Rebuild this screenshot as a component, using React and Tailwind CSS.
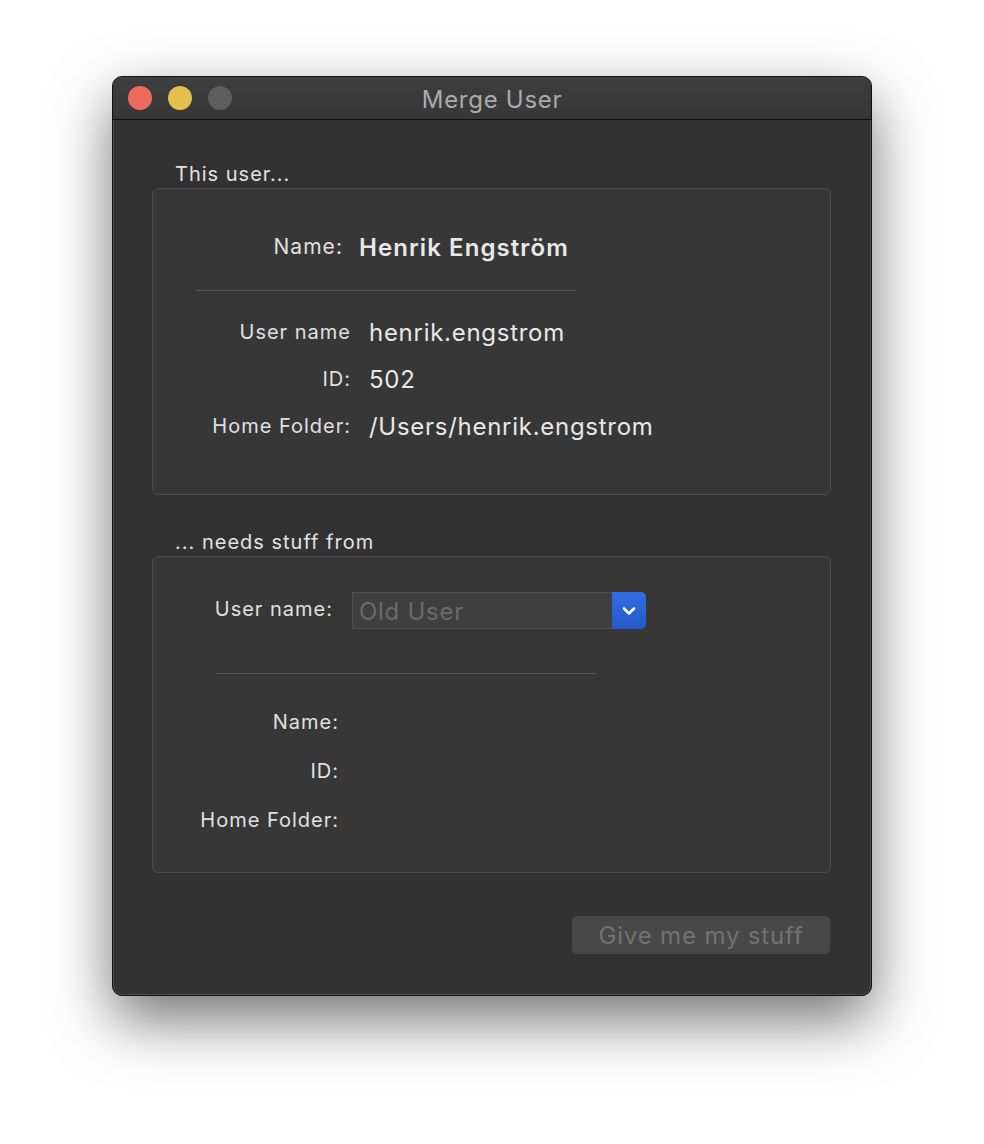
import { ChevronDown } from "lucide-react";

const font = { fontFamily: "Inter, 'Noto Sans', sans-serif" };

function Row({ label, value, labelWidth, gap, height, bold }) {
  return (
    <div className={`flex items-center ${height}`}>
      <div
        className={`${labelWidth} shrink-0 text-right ${bold ? "text-[21px]" : "text-[20px]"} tracking-[0.05em] text-[#e0e0e0]`}
      >
        {label}
      </div>
      <div
        className={`${gap} pt-[2px] text-[24px] text-[#e8e8e8] ${bold ? "font-semibold tracking-[0.045em]" : "font-normal tracking-[0.03em]"}`}
      >
        {value}
      </div>
    </div>
  );
}

export default function App() {
  return (
    <div className="min-h-[1144px] bg-white pl-[112px] pt-[76px]" style={font}>
      <div className="w-[760px] h-[920px] flex flex-col rounded-[10px] border border-[#111] bg-[#323232] shadow-[0_24px_60px_rgba(0,0,0,0.55),inset_0_0_0_1px_rgba(255,255,255,0.14)] overflow-hidden">
        {/* title bar */}
        <div className="relative h-[43px] shrink-0 flex items-center bg-gradient-to-b from-[#3e3e3e] to-[#373737] border-b border-[#0e0e0e]">
          <div className="flex items-center gap-[16px] pl-[15px]">
            <span className="w-[24px] h-[24px] rounded-full bg-[#ed6a5e]" />
            <span className="w-[24px] h-[24px] rounded-full bg-[#e2c04b]" />
            <span className="w-[24px] h-[24px] rounded-full bg-[#5e5e5e]" />
          </div>
          <div className="absolute inset-0 pt-[3px] flex items-center justify-center text-[24px] tracking-[0.03em] text-[#ababab] pointer-events-none">
            Merge User
          </div>
        </div>

        {/* body */}
        <div className="flex flex-col pt-[42px] pl-[39px] pr-[40px]">
          <div className="pl-[23px] h-[24px] leading-[24px] text-[20px] tracking-[0.05em] text-[#e2e2e2]">This user...</div>
          <div className="mt-[2px] h-[307px] rounded-[6px] border border-[#4c4c4c] bg-[#373737] flex flex-col">
            <div className="mt-[38px]">
              <Row label="Name:" value="Henrik Engström" labelWidth="w-[190px]" gap="ml-[16px]" height="h-[40px]" bold />
            </div>
            <div className="ml-[43px] mt-[23px] w-[380px] h-[1px] bg-[#565656]" />
            <div className="mt-[17px] flex flex-col">
              <Row label="User name" value="henrik.engstrom" labelWidth="w-[198px]" gap="ml-[18px]" height="h-[47px]" />
              <Row label="ID:" value="502" labelWidth="w-[198px]" gap="ml-[18px]" height="h-[47px]" />
              <Row label="Home Folder:" value="/Users/henrik.engstrom" labelWidth="w-[198px]" gap="ml-[18px]" height="h-[47px]" />
            </div>
          </div>

          <div className="mt-[35px] pl-[23px] h-[24px] leading-[24px] text-[20px] tracking-[0.05em] text-[#e2e2e2]">... needs stuff from</div>
          <div className="mt-[2px] h-[317px] rounded-[6px] border border-[#4c4c4c] bg-[#373737] flex flex-col">
            <div className="mt-[35px] flex items-center">
              <div className="w-[180px] pb-[4px] text-right text-[20px] tracking-[0.05em] text-[#e0e0e0]">User name:</div>
              <div className="ml-[19px] flex h-[37px] w-[294px]">
                <div className="flex-1 flex items-center pl-[6px] pt-[2px] bg-[#3f3f3f] border border-[#4e4e4e] border-r-0 text-[24px] tracking-[0.03em] text-[#6a6a6a]">
                  Old User
                </div>
                <div className="w-[34px] flex items-center justify-center rounded-r-[5px] bg-gradient-to-b from-[#2f6fe3] to-[#2659c9]">
                  <ChevronDown size={20} strokeWidth={3} className="text-white" />
                </div>
              </div>
            </div>
            <div className="ml-[63px] mt-[44px] w-[380px] h-[1px] bg-[#565656]" />
            <div className="mt-[23px] flex flex-col">
              {["Name:", "ID:", "Home Folder:"].map((l) => (
                <div key={l} className="h-[49px] flex items-center">
                  <div className="w-[186px] text-right text-[20px] tracking-[0.05em] text-[#e0e0e0]">{l}</div>
                </div>
              ))}
            </div>
          </div>

          <div className="mt-[43px] flex justify-end pr-[1px]">
            <button className="w-[258px] h-[38px] pt-[2px] rounded-[5px] bg-[#484848] text-[24px] tracking-[0.035em] text-[#727272]">
              Give me my stuff
            </button>
          </div>
        </div>
      </div>
    </div>
  );
}
